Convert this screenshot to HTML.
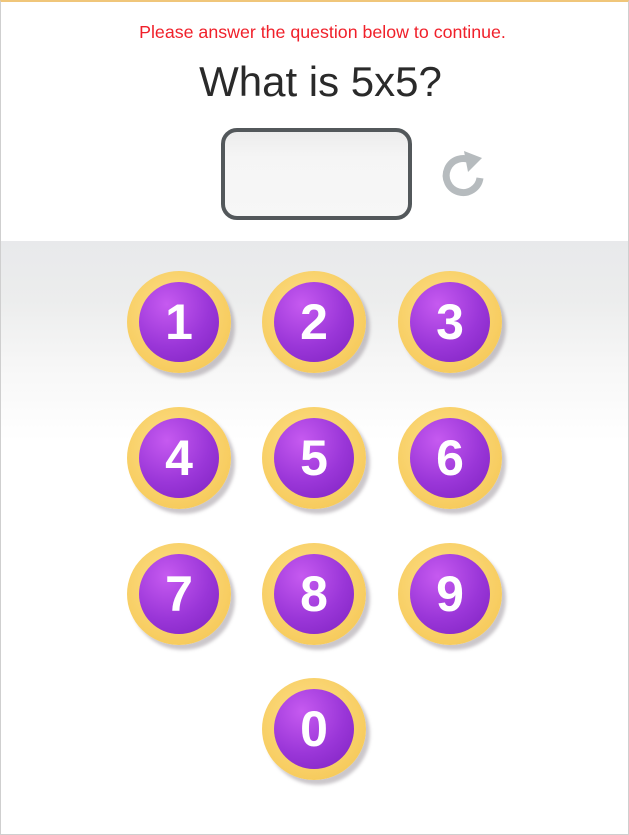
<!DOCTYPE html>
<html><head><meta charset="utf-8"><style>
html,body{margin:0;padding:0}
body{width:629px;height:834px;position:relative;overflow:hidden;background:#fff;font-family:"Liberation Sans",sans-serif}
.frame{position:absolute;left:0;top:0;width:627px;height:832px;border:1px solid #cfcfcf;border-top:2px solid #f0c67a}
.bg{position:absolute;left:1px;top:241px;width:627px;height:200px;background:linear-gradient(#e8e9eb 0%,#eceded 30%,#f6f6f6 60%,#fff 100%)}
.msg{position:absolute;top:22px;left:0;width:645px;text-align:center;color:#f0202a;font-size:17.8px}
.q{position:absolute;top:58px;left:0;width:641px;text-align:center;color:#2a2a2a;font-size:42px}
.box{position:absolute;left:221px;top:128px;width:183px;height:84px;border:4px solid #53585b;border-radius:16px;background:linear-gradient(#ececec,#f5f5f5 30%,#f7f7f7)}
.b{position:absolute;width:104px;height:102px;border-radius:50%;background:radial-gradient(circle at 45% 40%,#fde08a,#f7cc5f 70%,#f0c050);box-shadow:4px 5px 3px rgba(140,130,140,.45)}
.b i{position:absolute;left:12px;top:11px;width:80px;height:80px;border-radius:50%;background:radial-gradient(circle at 35% 28%,#c65af0,#9a36d8 55%,#7e22c0);font-style:normal;color:#fff;font-weight:bold;font-size:50px;line-height:80px;text-align:center;font-family:"Liberation Sans Narrow","Liberation Sans",sans-serif}
</style></head><body>
<div class="bg"></div>
<div class="frame"></div>
<div class="msg">Please answer the question below to continue.</div>
<div class="q">What is 5x5?</div>
<div class="box"></div>
<svg style="position:absolute;left:438px;top:148px" width="50" height="50" viewBox="0 0 50 50">
<path d="M34 13 A17 17 0 1 0 42 30" fill="none" stroke="#b6bbbe" stroke-width="7"/>
<polygon points="26,3 44,10 30,24" fill="#b6bbbe"/>
</svg>
<div class="b" style="left:127px;top:271px"><i>1</i></div>
<div class="b" style="left:262px;top:271px"><i>2</i></div>
<div class="b" style="left:398px;top:271px"><i>3</i></div>
<div class="b" style="left:127px;top:407px"><i>4</i></div>
<div class="b" style="left:262px;top:407px"><i>5</i></div>
<div class="b" style="left:398px;top:407px"><i>6</i></div>
<div class="b" style="left:127px;top:543px"><i>7</i></div>
<div class="b" style="left:262px;top:543px"><i>8</i></div>
<div class="b" style="left:398px;top:543px"><i>9</i></div>
<div class="b" style="left:262px;top:678px"><i>0</i></div>
</body></html>
